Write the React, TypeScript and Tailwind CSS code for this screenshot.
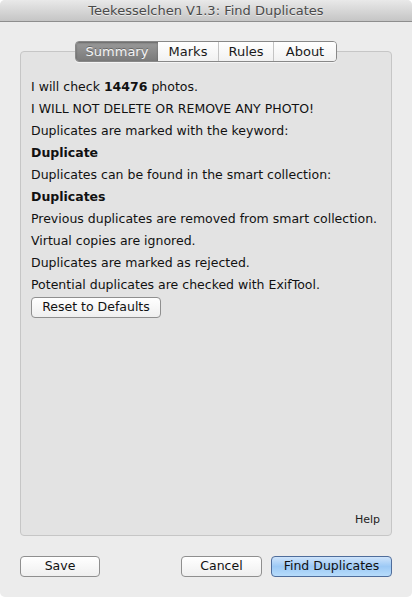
import type { ReactNode } from 'react';

const font = { fontFamily: '"DejaVu Sans", "Liberation Sans", sans-serif' };

function Tab({ label, w, selected, last }: { label: string; w: string; selected?: boolean; last?: boolean }) {
  if (selected) {
    return (
      <div className={`${w} h-full flex items-center justify-center bg-gradient-to-b from-[#9a9a9a] to-[#7a7a7a] text-[#f4f4f4] shadow-[inset_0_1px_2px_rgba(0,0,0,0.35)] [text-shadow:0_-1px_0_rgba(0,0,0,0.3)]`}>
        {label}
      </div>
    );
  }
  return (
    <div
      className={`${w} h-full flex items-center justify-center bg-gradient-to-b from-white to-[#f1f1f1] text-[#1a1a1a] ${
        last ? '' : 'border-r border-[#c4c4c4]'
      }`}
    >
      {label}
    </div>
  );
}

function Button({ children, w, primary }: { children: ReactNode; w: string; primary?: boolean }) {
  return (
    <button
      className={`${w} h-[21px] rounded-[4px] border text-[12.5px] leading-none flex items-center justify-center ${
        primary
          ? 'border-[#4f6d9b] bg-gradient-to-b from-[#cfe4fb] via-[#9cc9f5] to-[#b7dcfb] text-[#111]'
          : 'border-[#8f8f8f] bg-gradient-to-b from-white to-[#efefef] text-[#111]'
      }`}
      style={font}
    >
      {children}
    </button>
  );
}

export default function App() {
  const lines: { text: ReactNode; bold?: boolean }[] = [
    {
      text: (
        <>
          I will check <span className="font-bold mx-[4px]">14476</span> photos.
        </>
      ),
    },
    { text: 'I WILL NOT DELETE OR REMOVE ANY PHOTO!' },
    { text: 'Duplicates are marked with the keyword:' },
    { text: 'Duplicate', bold: true },
    { text: 'Duplicates can be found in the smart collection:' },
    { text: 'Duplicates', bold: true },
    { text: 'Previous duplicates are removed from smart collection.' },
    { text: 'Virtual copies are ignored.' },
    { text: 'Duplicates are marked as rejected.' },
    { text: 'Potential duplicates are checked with ExifTool.' },
  ];

  return (
    <div className="w-[412px] h-[597px] bg-white" style={font}>
      <div className="w-full h-full flex flex-col bg-[#ececec] rounded-[5px] overflow-hidden">
        {/* Title bar */}
        <div className="h-[22px] shrink-0 flex items-center justify-center bg-gradient-to-b from-[#e9e9e9] to-[#c5c5c5] border-b border-[#8e8e8e] text-[13px] text-[#4a4a4a] [text-shadow:0_1px_0_rgba(255,255,255,0.6)]">
          Teekesselchen V1.3: Find Duplicates
        </div>

        <div className="flex-1 flex flex-col px-[20px] pt-[19px]">
          {/* Tabs */}
          <div className="relative z-10 flex justify-center">
            <div className="h-[21px] flex rounded-[4px] border border-[#888] overflow-hidden text-[13px] shadow-[0_1px_0_rgba(255,255,255,0.6)]">
              <Tab label="Summary" w="w-[82px]" selected />
              <Tab label="Marks" w="w-[61px]" />
              <Tab label="Rules" w="w-[55px]" />
              <Tab label="About" w="w-[62px]" last />
            </div>
          </div>

          {/* Group box */}
          <div className="-mt-[11px] h-[485px] flex flex-col bg-[#e3e3e3] border border-[#c6c6c6] rounded-[4px] px-[10px] pt-[24px] pb-[7px]">
            <div className="flex flex-col text-[12.5px] text-[#111]">
              {lines.map((l, i) => (
                <div key={i} className={`h-[22px] flex items-center ${l.bold ? 'font-bold' : ''}`}>
                  {l.text}
                </div>
              ))}
            </div>
            <div className="mt-[1px]">
              <Button w="w-[130px]">Reset to Defaults</Button>
            </div>
            <div className="mt-auto flex justify-end pr-[1px] text-[11px] text-[#222]">Help</div>
          </div>

          {/* Bottom buttons */}
          <div className="mt-[20px] flex items-center">
            <Button w="w-[80px]">Save</Button>
            <div className="flex-1" />
            <Button w="w-[81px]">Cancel</Button>
            <div className="w-[9px]" />
            <Button w="w-[121px]" primary>
              Find Duplicates
            </Button>
          </div>
        </div>
      </div>
    </div>
  );
}
